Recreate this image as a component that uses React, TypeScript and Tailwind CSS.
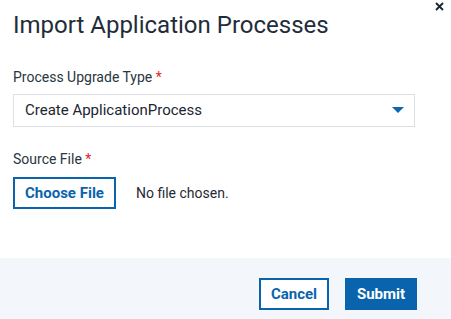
export default function App() {
  return (
    <div
      className="relative w-[451px] h-[319px] bg-white flex flex-col overflow-hidden text-[#1f2d3a]"
      style={{ fontFamily: "Roboto, 'Liberation Sans', sans-serif" }}
    >
      {/* close */}
      <button className="absolute right-[7px] top-[1px] w-[10px] h-[10px] flex items-center justify-center">
        <svg width="9" height="9" viewBox="0 0 9 9">
          <path d="M1 1L8 8M8 1L1 8" stroke="#1a2530" strokeWidth="1.8" />
        </svg>
      </button>

      <div className="flex-1 px-[13px] pt-[9px]">
        <h1 className="text-[24px] leading-[32px] text-[#1f2d3a]">
          Import Application Processes
        </h1>

        {/* upgrade type */}
        <div className="mt-[28px]">
          <label className="block text-[14px] leading-[17px] text-[#2a3640]">
            Process Upgrade Type <span className="text-[#e0262b]">*</span>
          </label>
          <div className="mt-[8px] w-[402px] h-[33px] border border-[#dcdfe3] flex items-center justify-between pl-[11px] pr-[10px]">
            <span className="text-[15px] text-[#1c2630]">Create ApplicationProcess</span>
            <svg width="12" height="7" viewBox="0 0 12 7">
              <path d="M0 0H12L6 6Z" fill="#0a67b3" />
            </svg>
          </div>
        </div>

        {/* source file */}
        <div className="mt-[24px]">
          <label className="block text-[14px] leading-[17px] text-[#2a3640]">
            Source File <span className="text-[#e0262b]">*</span>
          </label>
          <div className="mt-[9px] flex items-center gap-[20px]">
            <button className="w-[103px] h-[32px] border-2 border-[#0a64ad] text-[#0a64ad] text-[15px] font-bold">
              Choose File
            </button>
            <span className="text-[14px] text-[#1f2a33]">No file chosen.</span>
          </div>
        </div>
      </div>

      {/* footer */}
      <div className="h-[61px] bg-[#f3f6fa] flex items-start justify-end pr-[34px] pt-[20px] gap-[16px]">
        <button className="w-[70px] h-[32px] border-2 border-[#0a64ad] bg-white text-[#0a64ad] text-[15px] font-bold">
          Cancel
        </button>
        <button className="w-[72px] h-[32px] bg-[#0a64ad] text-white text-[15px] font-bold">
          Submit
        </button>
      </div>
    </div>
  );
}
